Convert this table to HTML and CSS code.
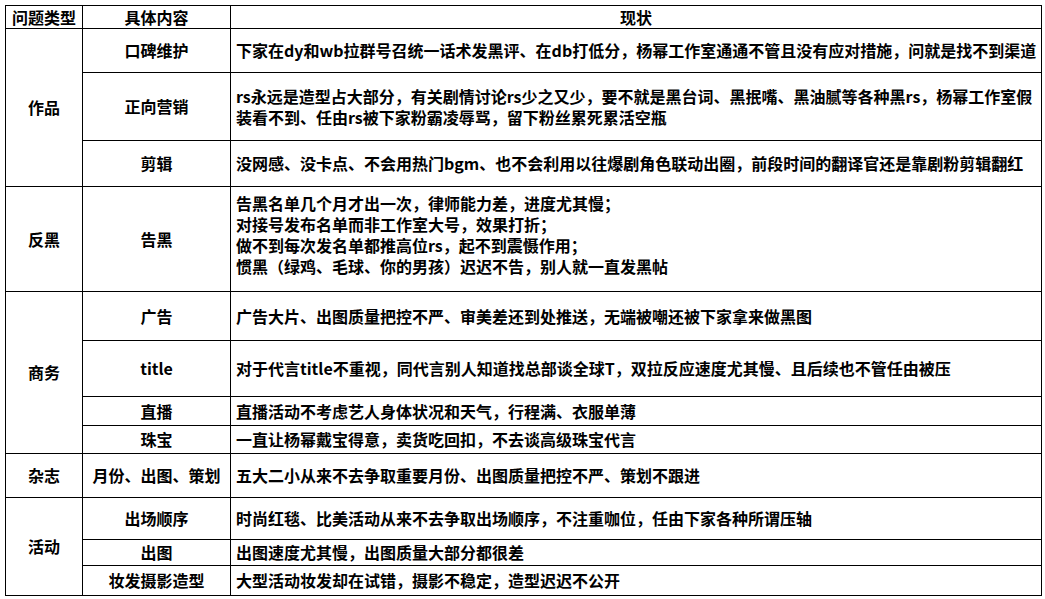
FILE: index.html
```html
<!DOCTYPE html>
<html lang="zh-CN">
<head>
<meta charset="utf-8">
<title>问题类型</title>
<link rel="stylesheet" href="styles.css">
</head>
<body>
<table class="sheet">
  <colgroup>
    <col class="c-type">
    <col class="c-item">
    <col class="c-desc">
  </colgroup>
  <tr class="h-head">
    <td class="ctr">问题类型</td>
    <td class="ctr">具体内容</td>
    <td class="ctr">现状</td>
  </tr>
  <tr class="h-44">
    <td class="ctr" rowspan="3">作品</td>
    <td class="ctr">口碑维护</td>
    <td class="desc">下家在dy和wb拉群号召统一话术发黑评、在db打低分，杨幂工作室通通不管且没有应对措施，问就是找不到渠道</td>
  </tr>
  <tr class="h-68">
    <td class="ctr">正向营销</td>
    <td class="desc">rs永远是造型占大部分，有关剧情讨论rs少之又少，要不就是黑台词、黑抿嘴、黑油腻等各种黑rs，杨幂工作室假<br>装看不到、任由rs被下家粉霸凌辱骂，留下粉丝累死累活空瓶</td>
  </tr>
  <tr class="h-46">
    <td class="ctr">剪辑</td>
    <td class="desc">没网感、没卡点、不会用热门bgm、也不会利用以往爆剧角色联动出圈，前段时间的翻译官还是靠剧粉剪辑翻红</td>
  </tr>
  <tr class="h-105">
    <td class="ctr">反黑</td>
    <td class="ctr">告黑</td>
    <td class="desc lift">告黑名单几个月才出一次，律师能力差，进度尤其慢；<br>对接号发布名单而非工作室大号，效果打折；<br>做不到每次发名单都推高位rs，起不到震慑作用；<br>惯黑（绿鸡、毛球、你的男孩）迟迟不告，别人就一直发黑帖</td>
  </tr>
  <tr class="h-49">
    <td class="ctr" rowspan="4">商务</td>
    <td class="ctr">广告</td>
    <td class="desc">广告大片、出图质量把控不严、审美差还到处推送，无端被嘲还被下家拿来做黑图</td>
  </tr>
  <tr class="h-56">
    <td class="ctr">title</td>
    <td class="desc">对于代言title不重视，同代言别人知道找总部谈全球T，双拉反应速度尤其慢、且后续也不管任由被压</td>
  </tr>
  <tr class="h-29">
    <td class="ctr">直播</td>
    <td class="desc">直播活动不考虑艺人身体状况和天气，行程满、衣服单薄</td>
  </tr>
  <tr class="h-28">
    <td class="ctr">珠宝</td>
    <td class="desc">一直让杨幂戴宝得意，卖货吃回扣，不去谈高级珠宝代言</td>
  </tr>
  <tr class="h-44">
    <td class="ctr">杂志</td>
    <td class="ctr">月份、出图、策划</td>
    <td class="desc">五大二小从来不去争取重要月份、出图质量把控不严、策划不跟进</td>
  </tr>
  <tr class="h-42">
    <td class="ctr" rowspan="3">活动</td>
    <td class="ctr">出场顺序</td>
    <td class="desc">时尚红毯、比美活动从来不去争取出场顺序，不注重咖位，任由下家各种所谓压轴</td>
  </tr>
  <tr class="h-26">
    <td class="ctr">出图</td>
    <td class="desc">出图速度尤其慢，出图质量大部分都很差</td>
  </tr>
  <tr class="h-30">
    <td class="ctr">妆发摄影造型</td>
    <td class="desc">大型活动妆发却在试错，摄影不稳定，造型迟迟不公开</td>
  </tr>
</table>
</body>
</html>
```

FILE: styles.css
```css
html, body {
  background: #ffffff;
}
body {
  margin: 5px 0 0 5px;
  font-family: "Microsoft YaHei", "Noto Sans CJK SC", "Noto Sans", sans-serif;
  font-weight: 700;
  font-size: 16px;
  line-height: 21px;
  color: #000000;
}
.sheet {
  border-collapse: collapse;
  table-layout: fixed;
  width: 1036px;
}
.c-type { width: 77px; }
.c-item { width: 148px; }
.c-desc { width: 811px; }
.sheet td {
  border: 1px solid #000000;
  padding: 0 5px;
  vertical-align: middle;
  white-space: nowrap;
  overflow: hidden;
}
.sheet td.ctr { text-align: center; padding: 0 2px; }
.sheet td.desc { text-align: left; }
.h-head td { height: 22px; }
.h-44 td { height: 43px; }
.h-68 td { height: 67px; }
.h-46 td { height: 45px; }
.h-105 td { height: 104px; }
.sheet .h-105 td.lift { height: 96px; padding-bottom: 8px; }
.h-49 td { height: 48px; }
.h-56 td { height: 55px; }
.h-29 td { height: 28px; }
.h-28 td { height: 27px; }
.h-42 td { height: 41px; }
.h-26 td { height: 25px; }
.h-30 td { height: 29px; }
```
